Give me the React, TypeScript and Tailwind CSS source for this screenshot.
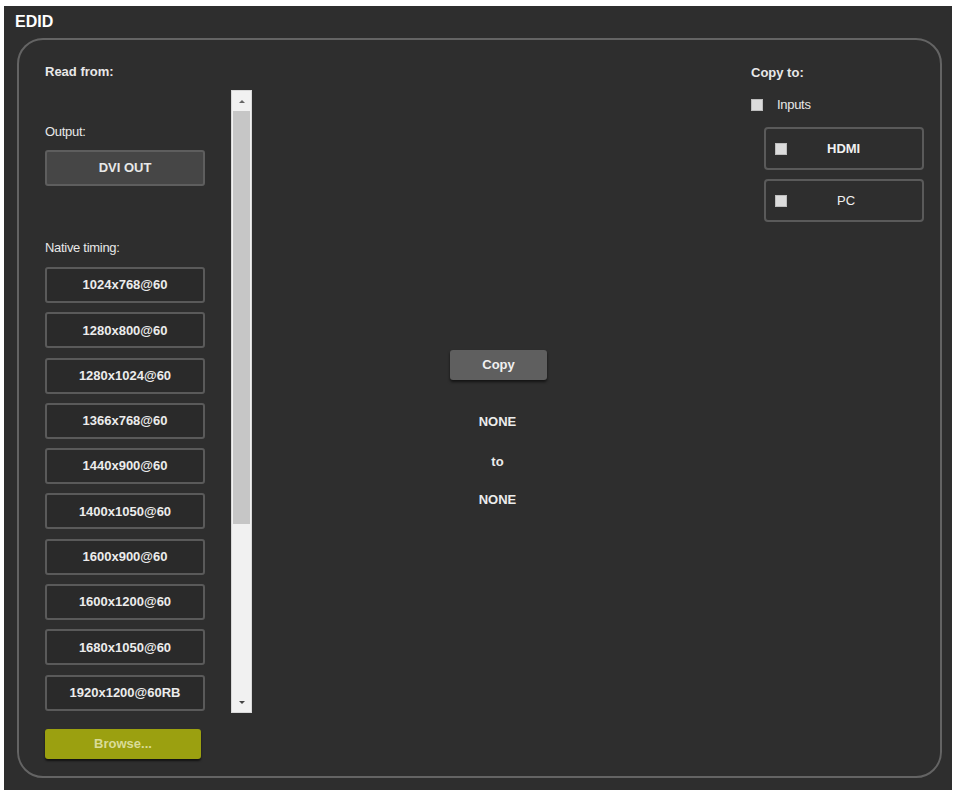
import React from "react";

const timings = [
  "1024x768@60",
  "1280x800@60",
  "1280x1024@60",
  "1366x768@60",
  "1440x900@60",
  "1400x1050@60",
  "1600x900@60",
  "1600x1200@60",
  "1680x1050@60",
  "1920x1200@60RB",
];

function Check() {
  return <div className="w-[12px] h-[12px] bg-[#dcdcdc] border border-[#bdbdbd] shrink-0" />;
}

export default function App() {
  return (
    <div
      className="w-[956px] h-[798px] bg-white pt-[6px] pl-[4px]"
      style={{ fontFamily: '"Liberation Sans", Arial, sans-serif' }}
    >
      <div className="w-[948px] h-[784px] bg-[#2e2e2e] flex flex-col">
        <div className="h-[32px] pl-[11px] pt-[7px] text-[16px] font-bold text-white leading-[18px]">EDID</div>
        <div className="ml-[13px] w-[925px] h-[740px] border-2 border-[#646464] rounded-[26px] flex">
          {/* left column */}
          <div className="ml-[26px] w-[160px] flex flex-col text-[13px] text-white">
            <div className="mt-[24px] font-bold leading-[16px] text-[#e8e8e8]">Read from:</div>
            <div className="mt-[44px] leading-[16px] tracking-[-0.3px] text-[#e8e8e8]">Output:</div>
            <div className="mt-[10px] h-[36px] w-[160px] bg-[#464646] border-2 border-[#5e5e5e] rounded-[3px] flex items-center justify-center font-bold text-[#e8e8e8]">
              DVI OUT
            </div>
            <div className="mt-[54px] leading-[16px] tracking-[-0.3px] text-[#e8e8e8]">Native timing:</div>
            <div className="mt-[11px] flex flex-col gap-[9.3px]">
              {timings.map((t) => (
                <div
                  key={t}
                  className="h-[36px] w-[160px] bg-[#2a2a2a] border-2 border-[#5a5a5a] rounded-[3px] flex items-center justify-center font-bold text-[#ececec]"
                >
                  {t}
                </div>
              ))}
            </div>
            <div className="mt-[18px] h-[30px] w-[156px] bg-[#9ba010] rounded-[3px] shadow-[0_2px_2px_rgba(0,0,0,0.6)] flex items-center justify-center font-bold text-[#d9dc98]">
              Browse...
            </div>
          </div>
          {/* scrollbar */}
          <div className="ml-[26px] mt-[50px] w-[21px] h-[623px] bg-[#f1f1f1] border border-[#d8d8d8] flex flex-col items-center">
            <div className="h-[20px] flex items-center justify-center">
              <div className="w-0 h-0 border-l-[3px] border-r-[3px] border-b-[3px] border-l-transparent border-r-transparent border-b-[#666]" />
            </div>
            <div className="w-[17px] h-[413px] bg-[#c6c6c6]" />
            <div className="flex-1" />
            <div className="h-[20px] flex items-center justify-center">
              <div className="w-0 h-0 border-l-[3px] border-r-[3px] border-t-[3px] border-l-transparent border-r-transparent border-t-[#444]" />
            </div>
          </div>
          {/* middle */}
          <div className="flex-1 flex flex-col items-center pt-[310px] pr-[6px] text-[13px] font-bold text-[#ececec]">
            <div className="w-[97px] h-[30px] bg-[#5f5f5f] rounded-[3px] shadow-[0_2px_3px_rgba(0,0,0,0.6)] flex items-center justify-center text-[#f0f0f0]">
              Copy
            </div>
            <div className="mr-[2px] mt-[34px] leading-[16px]">NONE</div>
            <div className="mr-[2px] mt-[24px] leading-[16px]">to</div>
            <div className="mr-[2px] mt-[22px] leading-[16px]">NONE</div>
          </div>
          {/* right column */}
          <div className="mr-[16px] w-[173px] flex flex-col text-[13px] text-[#e8e8e8]">
            <div className="mt-[25px] font-bold leading-[16px]">Copy to:</div>
            <div className="mt-[17px] flex items-center h-[14px]">
              <Check />
              <span className="ml-[14px] tracking-[-0.3px]">Inputs</span>
            </div>
            <div className="mt-[15px] ml-[13px] w-[160px] h-[43px] border-2 border-[#5a5a5a] rounded-[4px] flex items-center pl-[9px]">
              <Check />
              <span className="ml-[40px] font-bold text-[#f0f0f0]">HDMI</span>
            </div>
            <div className="mt-[9px] ml-[13px] w-[160px] h-[43px] border-2 border-[#5a5a5a] rounded-[4px] flex items-center pl-[9px]">
              <Check />
              <span className="ml-[50px] text-[#f0f0f0]">PC</span>
            </div>
          </div>
        </div>
      </div>
    </div>
  );
}
